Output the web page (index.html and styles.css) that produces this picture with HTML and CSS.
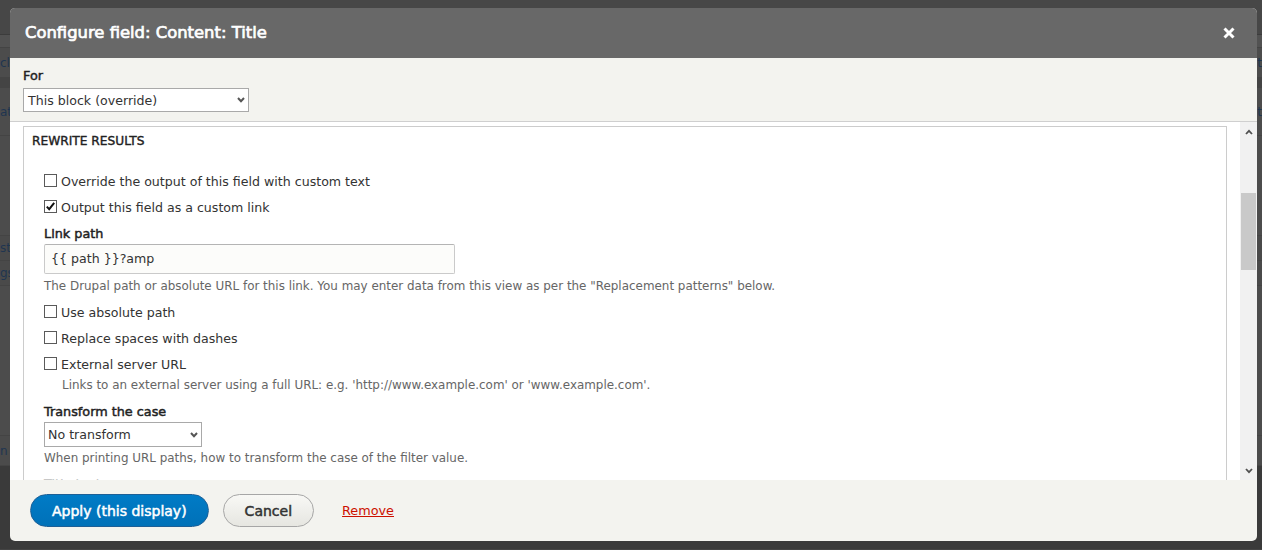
FILE: index.html
```html
<!DOCTYPE html>
<html lang="en">
<head>
<meta charset="utf-8">
<title>Configure field</title>
<link rel="stylesheet" href="styles.css">
</head>
<body>
<div class="page">
  <div class="pg-row pg-toolbar"></div>
  <div class="pg-row pg-tabs"></div>
  <div class="pg-row pg-r1"><span class="pg-l">cle</span><span class="pg-r">t</span></div>
  <div class="pg-row pg-sep"></div>
  <div class="pg-row pg-r2"><span class="pg-l">at</span><span class="pg-r">t</span></div>
  <div class="pg-row pg-r3"></div>
  <div class="pg-row pg-r4"><span class="pg-l">st</span></div>
  <div class="pg-row pg-r5"><span class="pg-l">gs</span></div>
  <div class="pg-row pg-r6"></div>
  <div class="pg-row pg-r7"><span class="pg-l">n /</span></div>
  <div class="pg-row pg-r8"></div>
</div>

<div class="dialog">
  <div class="dlg-title">
    <span class="dlg-title-text">Configure field: Content: Title</span>
    <span class="dlg-close" aria-label="Close">
      <svg width="12" height="12" viewBox="0 0 12 12"><path d="M1.5 1.5 L10.5 10.5 M10.5 1.5 L1.5 10.5" stroke="#fff" stroke-width="3"/></svg>
    </span>
  </div>

  <div class="dlg-for">
    <div class="label">For</div>
    <div class="select select-for">
      <span>This block (override)</span>
      <svg class="chev" width="8" height="6" viewBox="0 0 8 6"><path d="M1 1 L4 4.2 L7 1" fill="none" stroke="#555" stroke-width="2"/></svg>
    </div>
  </div>

  <div class="dlg-scroll">
    <div class="dlg-content">
      <div class="fieldset">
        <div class="legend">REWRITE RESULTS</div>
        <div class="fs-body">
          <div class="check first"><span class="box"></span><span>Override the output of this field with custom text</span></div>
          <div class="check"><span class="box"><svg width="11" height="11" viewBox="0 0 11 11"><path d="M1.8 5.6 L4.2 8.2 L9.2 1.8" fill="none" stroke="#111" stroke-width="2"/></svg></span><span>Output this field as a custom link</span></div>

          <div class="label item-label">Link path</div>
          <div class="input">{{ path }}?amp</div>
          <div class="desc">The Drupal path or absolute URL for this link. You may enter data from this view as per the "Replacement patterns" below.</div>

          <div class="check"><span class="box"></span><span>Use absolute path</span></div>
          <div class="check"><span class="box"></span><span>Replace spaces with dashes</span></div>
          <div class="check"><span class="box"></span><span>External server URL</span></div>
          <div class="desc desc-indent">Links to an external server using a full URL: e.g. 'http://www.example.com' or 'www.example.com'.</div>

          <div class="label item-label">Transform the case</div>
          <div class="select select-case">
            <span>No transform</span>
            <svg class="chev" width="8" height="6" viewBox="0 0 8 6"><path d="M1 1 L4 4.2 L7 1" fill="none" stroke="#555" stroke-width="2"/></svg>
          </div>
          <div class="desc desc-case">When printing URL paths, how to transform the case of the filter value.</div>

          <div class="label item-label">Title text</div>
          <div class="input"></div>
        </div>
      </div>
    </div>
    <div class="scrollbar">
      <div class="sb-arrow">
        <svg width="8" height="6" viewBox="0 0 8 6"><path d="M1 5 L4 1.8 L7 5" fill="none" stroke="#505050" stroke-width="1.8"/></svg>
      </div>
      <div class="sb-thumb"></div>
      <div class="sb-fill"></div>
      <div class="sb-arrow">
        <svg width="8" height="6" viewBox="0 0 8 6"><path d="M1 1 L4 4.2 L7 1" fill="none" stroke="#505050" stroke-width="1.8"/></svg>
      </div>
    </div>
  </div>

  <div class="dlg-footer">
    <span class="btn btn-primary">Apply (this display)</span>
    <span class="btn btn-cancel">Cancel</span>
    <a class="link-remove" href="#">Remove</a>
  </div>
</div>
</body>
</html>
```
FILE: styles.css
```css
* { box-sizing: border-box; }
html, body { margin: 0; padding: 0; }
body {
  width: 1262px;
  height: 550px;
  overflow: hidden;
  position: relative;
  background: #4b4b4b;
  font-family: "DejaVu Sans", Verdana, sans-serif;
  color: #333;
}

/* ---------- page behind the overlay ---------- */
.page { width: 100%; height: 100%; display: flex; flex-direction: column; }
.pg-row {
  display: flex;
  justify-content: space-between;
  align-items: center;
  font-size: 12px;
  color: #1f3550;
  white-space: nowrap;
  border-bottom: 1px solid #444;
}
.pg-toolbar { height: 35px; background: #474747; border-bottom: 1px solid #3c3c3c; }
.pg-tabs { height: 13px; background: #525252; }
.pg-r1 { height: 30px; background: #4c4c4c; }
.pg-sep { height: 10px; background: #444; }
.pg-r2 { height: 48px; background: #4c4c4c; }
.pg-r3 { height: 100px; background: #4c4c4c; }
.pg-r4 { height: 25px; background: #4a4a4a; }
.pg-r5 { height: 25px; background: #4a4a4a; }
.pg-r6 { height: 150px; background: #4c4c4c; }
.pg-r7 { height: 30px; background: #4b4b4b; }
.pg-r8 { flex: 1; background: #3a3a3a; }

/* ---------- dialog ---------- */
.dialog {
  position: absolute;
  left: 10px;
  top: 8px;
  width: 1247px;
  height: 533px;
  border-radius: 5px;
  overflow: hidden;
  background: #f3f3ef;
  display: flex;
  flex-direction: column;
}

.dlg-title {
  height: 50px;
  flex: none;
  background: #686868;
  display: flex;
  align-items: center;
  justify-content: space-between;
  padding: 0 22px 0 15px;
}
.dlg-title-text {
  color: #fff;
  font-size: 16.4px;
  line-height: 20px;
  -webkit-text-stroke: 0.7px #fff;
}
.dlg-close { display: flex; width: 12px; height: 12px; }

.label {
  font-size: 12.8px;
  line-height: 18px;
  color: #222;
  -webkit-text-stroke: 0.45px #222;
}

.dlg-for {
  flex: none;
  padding: 9px 13px;
  border-bottom: 1px solid #cfcfcf;
}

.select {
  display: flex;
  align-items: center;
  justify-content: space-between;
  background: #fff;
  border: 1px solid #a9a9a9;
  font-size: 12.6px;
  color: #333;
}
.select-for { width: 226px; height: 24px; margin-top: 3px; padding: 0 3px 0 4px; }
.select-case { width: 158px; height: 25px; margin-top: 1px; padding: 0 3px 0 3px; }
.chev { flex: none; }

/* scroll region */
.dlg-scroll {
  height: 358px;
  flex: none;
  background: #fff;
  display: flex;
}
.dlg-content {
  flex: 1;
  padding: 4px 13px 0;
  overflow: hidden;
}
.fieldset {
  border: 1px solid #cccccc;
  height: 500px;
}
.legend {
  padding: 7px 8px 0;
  font-size: 12.2px;
  line-height: 15px;
  color: #222;
  -webkit-text-stroke: 0.4px #222;
}
.fs-body { padding: 0 20px; }

.check {
  display: flex;
  align-items: center;
  height: 18px;
  margin-top: 8px;
  font-size: 12.6px;
  color: #333;
}
.check.first { margin-top: 23px; }
.box {
  width: 13px;
  height: 13px;
  flex: none;
  border: 1px solid #5a5a5a;
  background: #fff;
  margin-right: 4px;
  margin-top: -1px;
  display: flex;
  align-items: center;
  justify-content: center;
}

.item-label { margin-top: 9px; }

.input {
  width: 411px;
  height: 30px;
  margin-top: 1px;
  border: 1px solid #cacaca;
  border-top-color: #b4b4b4;
  border-radius: 2px;
  background: #fcfcfa;
  padding: 0 6px;
  font-size: 12.6px;
  line-height: 28px;
  color: #333;
}

.desc {
  margin-top: 3px;
  font-size: 11.93px;
  line-height: 18px;
  color: #666;
  white-space: nowrap;
}
.desc-indent { padding-left: 18px; }
.desc-case { margin-top: 2px; }

/* scrollbar */
.scrollbar {
  width: 17px;
  flex: none;
  background: #f1f1f1;
  display: flex;
  flex-direction: column;
}
.sb-arrow {
  height: 19px;
  display: flex;
  align-items: center;
  justify-content: center;
}
.sb-thumb {
  height: 77px;
  margin: 52px 1px 0;
  background: #c9c9c9;
}
.sb-fill { flex: 1; }

/* footer */
.dlg-footer {
  flex: 1;
  padding: 14px 20px;
  display: flex;
  align-items: center;
}
.btn {
  height: 33px;
  border-radius: 17px;
  padding: 0 21px;
  font-size: 14px;
  display: flex;
  align-items: center;
  white-space: nowrap;
}
.btn-primary {
  background: linear-gradient(#007bc6, #0071b8);
  border: 1px solid #1d5f96;
  color: #fff;
  -webkit-text-stroke: 0.5px #fff;
}
.btn-cancel {
  margin-left: 14px;
  background: linear-gradient(#f8f8f5, #e6e6e1);
  border: 1px solid #a6a6a6;
  color: #333;
  -webkit-text-stroke: 0.5px #333;
}
.link-remove {
  margin-left: 28px;
  color: #cc1100;
  text-decoration: underline;
  font-size: 12.8px;
}
```
